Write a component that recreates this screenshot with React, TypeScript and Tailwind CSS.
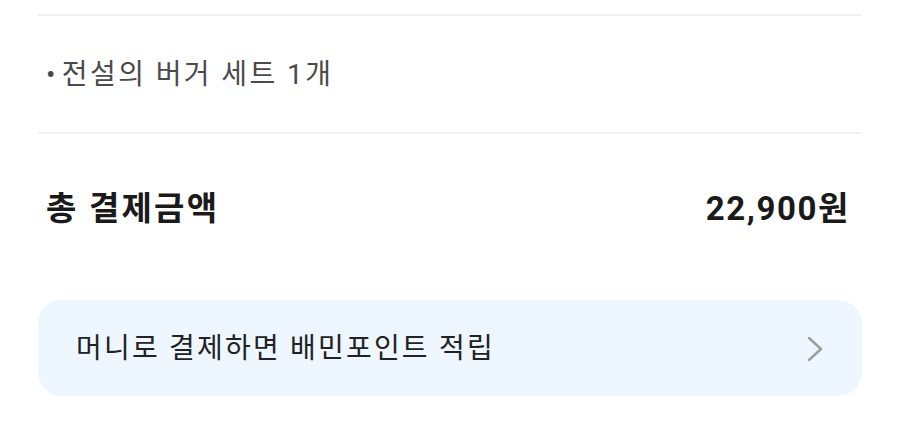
export default function App() {
  return (
    <div
      className="min-h-screen w-full bg-white px-[38px]"
      style={{ fontFamily: 'Roboto, "Noto Sans CJK KR", sans-serif' }}
    >
      <div className="h-[14px]" />
      <div className="h-[2px] bg-[#f2f2f2]" />

      <div className="flex h-[116px] items-center px-[8px] pt-[2px] text-[28px] tracking-[2.4px] text-[#4a4a4a]">
        <span className="mr-[4px]">•</span>
        <span>전설의 버거 세트 1개</span>
      </div>

      <div className="h-[2px] bg-[#f2f2f2]" />

      <div className="flex h-[150px] items-center justify-between pl-[8px] pr-[12px] text-[#1a1a1a]">
        <span className="text-[33px] font-bold tracking-[2.2px]">총 결제금액</span>
        <span className="text-[33px] font-bold tracking-[1.6px]">22,900원</span>
      </div>

      <div className="mt-[16px] flex h-[96px] items-center justify-between rounded-[24px] bg-[#eef7ff] pl-[38px] pr-[39px] pt-[2px]">
        <span className="text-[28px] tracking-[2.2px] text-[#222222]">머니로 결제하면 배민포인트 적립</span>
        <svg width="16" height="26" viewBox="0 0 16 26" fill="none">
          <path
            d="M2 2 L14 13 L2 24"
            stroke="#9e9e9e"
            strokeWidth="2.5"
            strokeLinecap="round"
            strokeLinejoin="round"
          />
        </svg>
      </div>
    </div>
  );
}
